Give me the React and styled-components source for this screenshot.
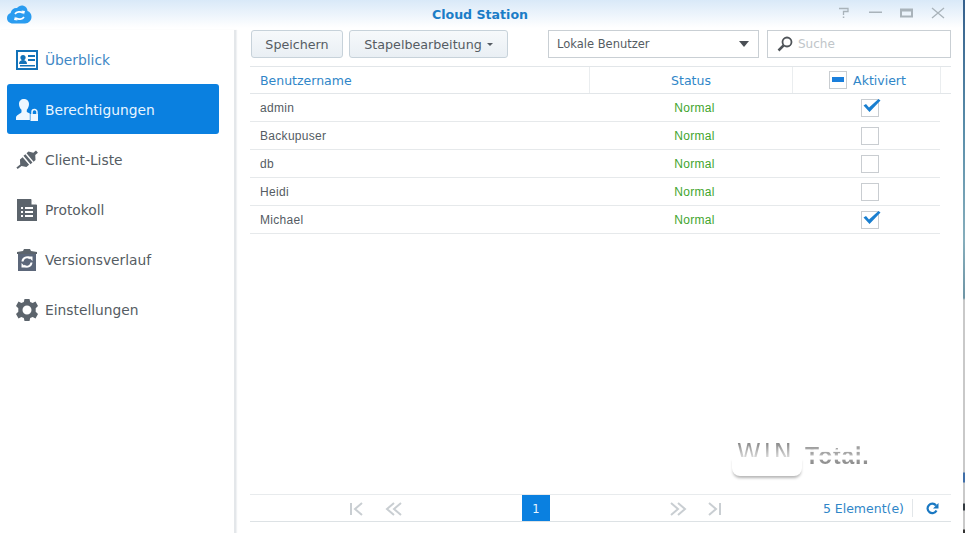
import React from "react";
import styled, { createGlobalStyle } from "styled-components";

const Global = createGlobalStyle`
  html, body { margin: 0; padding: 0; background: #fff; }
  body { font-family: "DejaVu Sans", sans-serif; }
`;

const Frame = styled.div`
  position: relative; width: 965px; height: 533px; overflow: hidden; background: #fff;
  display: flex; flex-direction: column;
`;
const EdgeStrip = styled.div`
  position: absolute; right: 0; top: 0; bottom: 0; width: 2px;
  background: linear-gradient(180deg, #36608c 0px, #5a8eaa 130px, #86aebc 240px, #6f95a5 298px,
    #c9c9c9 300px, #c9c9c9 472px, #3f6ea8 473px, #3f6ea8 482px, #c9c9c9 483px, #c9c9c9 503px,
    #333a40 504px, #333a40 510px, #c9c9c9 511px, #c9c9c9 529px, #333 530px);
`;
const TitleBar = styled.header`
  height: 28px; flex: none; position: relative; display: flex; align-items: center; justify-content: center;
  background: linear-gradient(180deg, #d9e9f8 0%, #eef5fc 55%, #ffffff 100%);
`;
const Title = styled.h1`
  margin: 0 0 0 -5px; padding-top: 1px; font-size: 12.6px; font-weight: 700; color: #1b7dc7;
`;
const AppLogo = styled.svg`position: absolute; left: 7px; top: 5px;`;
const WinButtons = styled.div`
  position: absolute; right: 20px; top: 5px; display: flex; gap: 18px; align-items: center;
`;
const HelpIcon = styled.svg`margin-right: 2px;`;
const Body = styled.div`flex: 1; display: flex; min-height: 0;`;
const Sidebar = styled.nav`
  width: 236px; flex: none; padding: 4px 15px 0 7px; box-sizing: border-box;
  border-right: 2px solid #e4e7ea; box-shadow: 1px 0 1px #f0f2f4;
  display: flex; flex-direction: column; margin-top: 2px;
`;
const NavItem = styled.div`
  height: 50px; box-sizing: border-box; padding-top: 2px; display: flex; align-items: center; gap: 7px; padding-left: 9px; border-radius: 3px;
  font-size: 13.8px;
  background: ${p => (p.$active ? "#0a80e0" : "transparent")};
  color: ${p => (p.$active ? "#e8f5ff" : p.$current ? "#3f88c5" : "#555c63")};
`;
const IconSlot = styled.span`width: 22px; height: 22px; display: flex; align-items: center; justify-content: center; flex: none;`;
const Main = styled.main`
  flex: 1; display: flex; flex-direction: column; padding: 2px 14px 0 14px; min-width: 0;
`;
const Toolbar = styled.div`display: flex; align-items: center; height: 28px; flex: none; padding-left: 1px;`;
const Button = styled.button`
  height: 28px; box-sizing: border-box; padding: 0; width: ${p => p.$w}px; margin-right: 6px;
  border: 1px solid #c7d2da; border-radius: 3px;
  background: linear-gradient(180deg, #f6f9fb, #e9eff4);
  font: 12.7px "DejaVu Sans", sans-serif; color: #555c63; display: flex; align-items: center; justify-content: center; gap: 5px;
`;
const Caret = styled.i`width: 0; height: 0; border: 3px solid transparent; border-top: 3px solid #555c63; margin-top: 3px;`;
const Select = styled.div`
  width: 211px; height: 28px; box-sizing: border-box; margin-left: 34px; border: 1px solid #c9cfd4;
  display: flex; align-items: center; justify-content: space-between; padding: 0 8px;
  font: 11.5px "DejaVu Sans", sans-serif; color: #555c63;
`;
const SelectArrow = styled.i`width: 0; height: 0; border: 5.5px solid transparent; border-top: 6px solid #4a4f55; border-bottom: 0; margin-right: 1px;`;
const Search = styled.div`
  width: 184px; height: 28px; box-sizing: border-box; margin-left: 8px; border: 1px solid #c9cfd4;
  display: flex; align-items: center; gap: 5px; padding-left: 9px; font-size: 12px; color: #c0c5c9;
`;
const Table = styled.div`margin-top: 8px; border-top: 1px solid #e2e6e9; flex: 1; width: 701px;`;
const HeaderRow = styled.div`
  display: grid; grid-template-columns: 340px 203px 148px 10px; height: 26px; border-bottom: 1px solid #e2e6e9;
`;
const HeaderCell = styled.div`
  display: flex; align-items: center; justify-content: ${p => p.$left ? "flex-start" : "center"}; gap: 6px;
  padding-left: ${p => p.$pad}px; font-size: 12.5px; color: #2f86c8;
  border-right: ${p => p.$noBorder ? 0 : "1px solid #eaedef"};
`;
const Row = styled.div`
  display: grid; grid-template-columns: 340px 203px 147px; width: 690px; height: 27px; border-bottom: 1px solid #e6e9eb; align-items: center;
  font: 12px "Liberation Sans", sans-serif; letter-spacing: .3px; color: #555c63;
`;
const NameCell = styled.div`padding-left: 10px;`;
const StatusCell = styled.div`text-align: center; color: #3fa52e; padding-left: 6px;`;
const BoxCell = styled.div`display: flex; justify-content: center; padding-left: 6px;`;
const Check = styled.span`
  position: relative; display: block; width: 16px; height: 16px; border: 1px solid #c9cdd1; background: #fff;
  svg { position: absolute; left: 0; top: -3px; }
`;
const Minus = styled.span`
  position: relative; display: block; width: 16px; height: 16px; border: 1px solid #c9cdd1; background: #fff;
  &::after { content: ""; position: absolute; left: 2px; top: 5px; width: 12px; height: 5px; background: #1a7fdc; }
`;
const Footer = styled.footer`
  height: 26px; flex: none; margin-bottom: 11px; width: 701px; border-top: 1px solid #e8ebed; border-bottom: 1px solid #dde2e5;
  display: flex; align-items: stretch; position: relative;
`;
const PageNum = styled.div`
  position: absolute; left: 272px; top: 0; width: 28px; height: 26px; background: #0a80e0; color: #eaf6ff;
  font-size: 11.5px; display: flex; align-items: center; justify-content: center; padding-top: 1px; box-sizing: border-box;
`;
const PagerIcon = styled.svg`position: absolute; top: 7px; left: ${p => p.$x}px;`;
const FooterRight = styled.div`
  margin-left: auto; display: flex; align-items: center; font-size: 12.5px; color: #2f86c8; padding-right: 12px;
`;
const RefreshBox = styled.span`
  margin-left: 8px; padding-left: 13px; height: 18px; display: flex; align-items: center; border-left: 1px solid #e2e6e9;
`;
const Watermark = styled.div`position: absolute; left: 729px; top: 430px; width: 150px; height: 52px;`;
const WmCard = styled.div`
  position: absolute; left: 3px; top: 27px; width: 70px; height: 19px; border-radius: 0 0 8px 8px; background: #fff;
  box-shadow: 0 3px 3px -1px #b4b4b4;
`;
const WmWin = styled.span`
  position: absolute; left: 8px; top: 9px; font: 24px/28px "DejaVu Sans", sans-serif; letter-spacing: 3px;
  color: transparent; background: linear-gradient(180deg, transparent 14%, #8c8c8c 16%, #bbb 45%, #e8e8e8 75%);
  -webkit-background-clip: text; background-clip: text;
`;
const WmTotal = styled.span`
  position: absolute; left: 76px; top: 13px; font: 700 23px/26px "Liberation Sans", sans-serif; letter-spacing: .8px;
  color: transparent; filter: blur(.3px);
  background: linear-gradient(180deg, #fff 12%, #999 14%, #aaa 24%, #fff 26%, #f2f2f2 34%, #999 37%, #bbb 46%, #fff 50%, #fff 62%, #999 66%, #888 85%, #fff 88%);
  -webkit-background-clip: text; background-clip: text;
`;

const c = "#5c646c";
const icons = {
  overview: <svg width="22" height="20" viewBox="0 0 22 20"><path fill="#1272b8" fillRule="evenodd" d="M0 0h22v20H0zM2 2v16h18V2z"/><circle cx="7" cy="7.500" r="2.600" fill="#1272b8"/><path fill="#1272b8" d="M3 14c0-3 2-4 4-4s4 1 4 4zM12 5h7v2h-7zM12 9h7v2h-7zM4 15h15v1.500H4z"/></svg>,
  perms: <svg width="22" height="22" viewBox="0 0 22 22"><path fill="#eef7ff" d="M8 0c3.200 0 5 2.200 5 5 0 2.500-1 4.500-2.200 5.700V13c1 .6 2 1 3 1.500V21H0v-2.500C0 16 4 15 5.500 13.200v-2.500C4 9.500 3 7.500 3 5c0-3 2-5 5-5z"/><path fill="none" stroke="#eef7ff" strokeWidth="1.500" d="M16 15v-2a2.500 2.500 0 015 0v2"/><path fill="#eef7ff" d="M14.500 15H22v7h-7.500z"/></svg>,
  client: <svg width="22" height="22" viewBox="0 0 22 22"><g fill={c} transform="rotate(-40 11 11)"><path d="M-2 10h5l3-4h3.500v10H6l-3-4h-5z"/><path d="M11 5.500h2.500v11H11z"/><path d="M15 5.500h2.500l3 4H24v3h-3.500l-3 4H15z"/></g></svg>,
  log: <svg width="20" height="22" viewBox="0 0 20 22"><path fill={c} d="M0 0h14l6 6v16H0z"/><path fill="#fff" d="M14.500 0L20 5.500h-5.500zM4 8h2v2H4zM8 8h8v2H8zM4 12h2v2H4zM8 12h8v2H8zM4 16h2v2H4zM8 16h8v2H8z"/></svg>,
  version: <svg width="20" height="22" viewBox="0 0 20 22"><path fill="#5c677a" d="M1 4h18v18H1z"/><path fill={c} d="M0 3l6-1 1-2h6l1 2 6 1v2H0z"/><path fill="none" stroke="#fff" strokeWidth="2" d="M5.500 12.500A4.500 4.500 0 0113 9.500M14.500 13.500A4.500 4.500 0 017 16.500"/><path fill="#fff" d="M11 7.500h4.500V12zM9 18.500H4.500V14z"/></svg>,
  gear: <svg width="22" height="22" viewBox="0 0 22 22"><path fill={c} fillRule="evenodd" d="M8.500 0h5l.7 3 2.500 1.100L19.500 2.500 22 7l-2.300 2.200v3.600L22 15l-2.500 4.500-2.800-1.600-2.500 1.100-.7 3h-5l-.7-3-2.500-1.100-2.800 1.600L0 15l2.300-2.200V9.200L0 7l2.500-4.500 2.800 1.600L7.800 3zM11 6.500a4.500 4.500 0 100 9 4.500 4.500 0 000-9z"/></svg>,
};

const items = [
  ["Überblick", "overview"], ["Berechtigungen", "perms"], ["Client-Liste", "client"],
  ["Protokoll", "log"], ["Versionsverlauf", "version"], ["Einstellungen", "gear"],
];
const users = [["admin", true], ["Backupuser", false], ["db", false], ["Heidi", false], ["Michael", true]];

const Tick = () => (
  <svg width="20" height="18" viewBox="0 0 20 18"><path fill="#1a7fd0" d="M1.500 8.500l2.500-1.500 3 3.500L16.500 2l2 1.500L7.500 15z"/></svg>
);

export default function App() {
  return (
    <Frame>
      <Global />
      <TitleBar>
        <AppLogo width="25" height="19" viewBox="0 0 25 19">
          <path fill="#2a9cf0" d="M6 18.500C2.500 18.500 0 16.200 0 13c0-2.600 1.600-4.400 3.600-5C4.500 4 7.500 2.500 10 3c1.700-2 4-3 6.500-2.300C19 1.500 20.500 3.500 20.500 6c2.500.8 4 3 4 5.800 0 3.800-2.800 6.700-6.500 6.700z"/>
          <path fill="none" stroke="#fff" strokeWidth="1.700" d="M8 9a5 4 0 018-1M17 12a5 4 0 01-8 1"/>
          <path fill="#fff" d="M14.500 5.500l3.500 .5-1 3.500zM10.500 15.500l-3.500-.5 1-3.500z"/>
        </AppLogo>
        <Title>Cloud Station</Title>
        <WinButtons>
          <HelpIcon width="11" height="14" viewBox="0 0 11 14"><path fill="none" stroke="#a9b3ba" strokeWidth="1.300" d="M1 3.500h9v3H5.500V10"/><path fill="#a9b3ba" d="M4.800 11.500h1.500v1.500H4.800z"/></HelpIcon>
          <svg width="13" height="14" viewBox="0 0 13 14"><path fill="#a9b3ba" d="M0 6.500h13V8H0z"/></svg>
          <svg width="13" height="14" viewBox="0 0 13 14"><path fill="#a9b3ba" fillRule="evenodd" d="M0 3.500h13v9H0zM2 6.500V10.500h9V6.500z"/></svg>
          <svg width="14" height="14" viewBox="0 0 14 14"><path stroke="#a9b3ba" strokeWidth="1.300" d="M1 3l12 10M13 3L1 13"/></svg>
        </WinButtons>
      </TitleBar>
      <Body>
        <Sidebar>
          {items.map(([label, icon], i) => (
            <NavItem key={label} $active={i === 1} $current={i === 0}>
              <IconSlot>{icons[icon]}</IconSlot>
              {label}
            </NavItem>
          ))}
        </Sidebar>
        <Main>
          <Toolbar>
            <Button $w={92}>Speichern</Button>
            <Button $w={159}>Stapelbearbeitung <Caret /></Button>
            <Select>Lokale Benutzer <SelectArrow /></Select>
            <Search>
              <svg width="16" height="16" viewBox="0 0 16 16"><circle cx="10" cy="6" r="4.500" fill="none" stroke="#4f5459" strokeWidth="1.800"/><path stroke="#4f5459" strokeWidth="2.500" d="M6.500 9.500L1.500 14.500"/></svg>
              Suche
            </Search>
          </Toolbar>
          <Table>
            <HeaderRow>
              <HeaderCell $left $pad={10}>Benutzername</HeaderCell>
              <HeaderCell $pad={0}>Status</HeaderCell>
              <HeaderCell $pad={2}><Minus />Aktiviert</HeaderCell>
              <HeaderCell $noBorder $pad={0} />
            </HeaderRow>
            {users.map(([name, on]) => (
              <Row key={name}>
                <NameCell>{name}</NameCell>
                <StatusCell>Normal</StatusCell>
                <BoxCell><Check>{on && <Tick />}</Check></BoxCell>
              </Row>
            ))}
          </Table>
          <Footer>
            <PagerIcon $x={99} width="16" height="14" viewBox="0 0 16 14" fill="none" stroke="#c9ced2" strokeWidth="2"><path d="M2 1v12M13 1L6 7l7 6" /></PagerIcon>
            <PagerIcon $x={135} width="18" height="14" viewBox="0 0 18 14" fill="none" stroke="#c9ced2" strokeWidth="2"><path d="M9 1L2 7l7 6M16 1L9 7l7 6" /></PagerIcon>
            <PageNum>1</PageNum>
            <PagerIcon $x={419} width="18" height="14" viewBox="0 0 18 14" fill="none" stroke="#c9ced2" strokeWidth="2"><path d="M2 1l7 6-7 6M9 1l7 6-7 6" /></PagerIcon>
            <PagerIcon $x={457} width="16" height="14" viewBox="0 0 16 14" fill="none" stroke="#c9ced2" strokeWidth="2"><path d="M2 1l7 6-7 6M13 1v12" /></PagerIcon>
            <FooterRight>
              5 Element(e)
              <RefreshBox>
                <svg width="13" height="13" viewBox="0 0 13 13"><path fill="none" stroke="#1a78c2" strokeWidth="2.200" d="M10.500 8.500A4.700 4.700 0 1 1 10 3.500"/><path fill="#1a78c2" d="M12.500 1v5.500H7z"/></svg>
              </RefreshBox>
            </FooterRight>
          </Footer>
        </Main>
      </Body>
      <Watermark>
        <WmWin>WIN</WmWin>
        <WmCard />
        <WmTotal>Total.</WmTotal>
      </Watermark>
      <EdgeStrip />
    </Frame>
  );
}
